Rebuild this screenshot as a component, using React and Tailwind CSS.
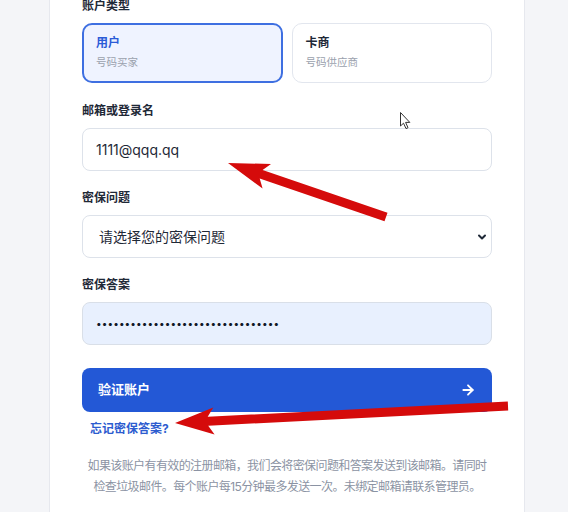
import { ArrowRight, ChevronDown } from "lucide-react";

// red annotation arrow, built from tip/tail coordinates
function arrowPoints(tip, tail, headLen, headHalf, shaftHalf) {
  const dx = tip[0] - tail[0];
  const dy = tip[1] - tail[1];
  const len = Math.hypot(dx, dy);
  const ux = dx / len;
  const uy = dy / len;
  const nx = -uy;
  const ny = ux;
  const base = [tip[0] - ux * headLen, tip[1] - uy * headLen];
  const join = [tip[0] - ux * (headLen - 6), tip[1] - uy * (headLen - 6)];
  const pts = [
    tip,
    [base[0] + nx * headHalf, base[1] + ny * headHalf],
    [join[0] + nx * shaftHalf, join[1] + ny * shaftHalf],
    [tail[0] + nx * shaftHalf, tail[1] + ny * shaftHalf],
    [tail[0] - nx * shaftHalf, tail[1] - ny * shaftHalf],
    [join[0] - nx * shaftHalf, join[1] - ny * shaftHalf],
    [base[0] - nx * headHalf, base[1] - ny * headHalf],
  ];
  return pts.map((p) => p[0].toFixed(1) + "," + p[1].toFixed(1)).join(" ");
}

function Overlay() {
  return (
    <svg className="absolute left-0 top-0 pointer-events-none" width="568" height="512">
      <polygon points={arrowPoints([228, 163], [386, 217], 41, 13, 4.5)} fill="#d50b0b" />
      <polygon points={arrowPoints([175, 423], [508, 406], 39, 13.5, 4.5)} fill="#d50b0b" />
      <path
        d="M400.5 112.5 L400.5 126 L403.5 123.2 L406 128.6 L408 127.7 L405.6 122.4 L409.8 122.4 Z"
        fill="#ffffff"
        stroke="#333"
        strokeWidth="1"
        strokeLinejoin="round"
      />
    </svg>
  );
}

function Label({ children }) {
  return <div className="text-[12px] leading-5 font-bold text-[#1f2937] mb-[7px]">{children}</div>;
}

export default function App() {
  const font = { fontFamily: 'Inter, "Noto Sans CJK SC", sans-serif' };
  return (
    <div className="relative w-[568px] h-[512px] overflow-hidden bg-[#f4f5f8]" style={font}>
      <div className="ml-[49px] w-[476px] -mt-[28px] bg-white border border-[#e6e8ee] rounded-xl px-8 pt-[23px] pb-10">
        <Label>账户类型</Label>
        <div className="grid grid-cols-2 gap-[9px] mt-[5px]">
          <div className="h-[60px] rounded-[10px] border-2 border-[#3e6fe1] bg-[#eff3ff] px-3 flex flex-col justify-center">
            <div className="text-[12px] leading-5 font-bold text-[#2b5bd7]">用户</div>
            <div className="text-[10.5px] leading-5 text-[#9aa1ad]">号码买家</div>
          </div>
          <div className="h-[60px] rounded-[10px] border border-[#e2e6ee] px-[13px] flex flex-col justify-center">
            <div className="text-[12px] leading-5 font-bold text-[#1f2937]">卡商</div>
            <div className="text-[10.5px] leading-5 text-[#9aa1ad]">号码供应商</div>
          </div>
        </div>

        <div className="mt-[18px]">
          <Label>邮箱或登录名</Label>
          <div className="h-[43px] rounded-lg border border-[#dde2ea] px-[13px] flex items-center text-[14px] text-[#1f2937]">
            1111@qqq.qq
          </div>
        </div>

        <div className="mt-[17px]">
          <Label>密保问题</Label>
          <div className="h-[43px] rounded-lg border border-[#dde2ea] pl-4 pr-[3px] flex items-center justify-between text-[14px] text-[#1f2937]">
            <span>请选择您的密保问题</span>
            <ChevronDown size={12} strokeWidth={4} className="text-[#1f2937]" />
          </div>
        </div>

        <div className="mt-[17px]">
          <Label>密保答案</Label>
          <div className="h-[43px] rounded-lg border border-[#d9dfe8] bg-[#e8f0fe] px-[13px] flex items-center text-[10px] tracking-[0.1px] text-[#111827]">
            {"•".repeat(32)}
          </div>
        </div>

        <button className="mt-[23px] w-full h-11 rounded-lg bg-[#2358d6] px-4 flex items-center justify-between text-white">
          <span className="text-[13px] font-bold">验证账户</span>
          <ArrowRight size={16} strokeWidth={2.75} />
        </button>

        <div className="mt-[8px] px-2 text-[12px] leading-[18px] font-bold text-[#2d5ccf]">忘记密保答案?</div>

        <p className="mt-[17px] text-center text-[12px] leading-[21px] tracking-[-0.6px] text-[#8b93a3]">
          <span className="block whitespace-nowrap">如果该账户有有效的注册邮箱，我们会将密保问题和答案发送到该邮箱。请同时</span>
          <span className="block whitespace-nowrap">检查垃圾邮件。每个账户每15分钟最多发送一次。未绑定邮箱请联系管理员。</span>
        </p>
      </div>
      <Overlay />
    </div>
  );
}
